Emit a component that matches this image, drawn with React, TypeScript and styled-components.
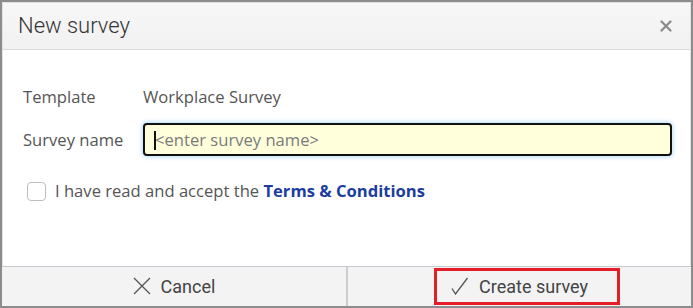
import styled, { createGlobalStyle } from "styled-components";

const GlobalStyle = createGlobalStyle`
  html, body {
    margin: 0;
    padding: 0;
    background: #ffffff;
  }
  * {
    box-sizing: border-box;
  }
`;

const Frame = styled.div`
  width: 693px;
  height: 308px;
  border: 2px solid #8c8c8c;
  display: flex;
  flex-direction: column;
`;

const Dialog = styled.div`
  flex: 1;
  display: flex;
  flex-direction: column;
  border: 1px solid #e2e2e2;
  border-bottom: none;
  background: #ffffff;
`;

const Header = styled.div`
  height: 47px;
  flex: none;
  display: flex;
  align-items: center;
  justify-content: space-between;
  padding: 0 18px 0 15px;
  background: linear-gradient(#f7f7f7, #f1f1f1);
  border-bottom: 1px solid #dadada;
`;

const Title = styled.h1`
  margin: 0;
  font-family: Roboto, "Liberation Sans", sans-serif;
  font-weight: 300;
  font-size: 22px;
  color: #333333;
  padding-bottom: 1px;
`;

const CloseButton = styled.button`
  border: none;
  background: none;
  padding: 0;
  width: 12px;
  height: 12px;
  display: flex;
  cursor: pointer;
`;

const Body = styled.div`
  flex: 1;
  display: flex;
  flex-direction: column;
  padding: 37px 18px 0 20px;
  font-family: "Open Sans", "Liberation Sans", sans-serif;
  font-size: 16.6px;
  color: #555555;
`;

const FieldRow = styled.div<{ $gap?: number }>`
  display: grid;
  grid-template-columns: 120px 1fr;
  align-items: center;
  margin-bottom: ${(p) => p.$gap ?? 0}px;
`;

const Label = styled.span`
  line-height: 20px;
`;

const Value = styled.span`
  line-height: 20px;
`;

const InputWrap = styled.div`
  position: relative;
  height: 33px;
`;

const NameInput = styled.input`
  width: 100%;
  height: 100%;
  border: 2px solid #111111;
  border-radius: 4px;
  background: #ffffdc;
  box-shadow: 0 0 4px 1px rgba(120, 190, 240, 0.55);
  padding: 0 0 1px 10px;
  font-family: "Open Sans", "Liberation Sans", sans-serif;
  font-size: 16.6px;
  color: #333333;
  outline: none;

  &::placeholder {
    color: #7a7a7a;
  }
`;

const Caret = styled.span`
  position: absolute;
  left: 11px;
  top: 8px;
  width: 2px;
  height: 19px;
  background: #111111;
`;

const CheckRow = styled.label`
  display: flex;
  align-items: center;
  gap: 9px;
  margin-left: 4px;
  line-height: 20px;
`;

const Box = styled.span`
  width: 19px;
  height: 19px;
  border: 1px solid #bdbdbd;
  border-radius: 4px;
  background: #ffffff;
`;

const TermsLink = styled.a`
  color: #1c3d9e;
  font-weight: 700;
  text-decoration: none;
`;

const Footer = styled.div`
  height: 40px;
  flex: none;
  display: grid;
  grid-template-columns: 344px 1fr;
  border-top: 1px solid #c9c9d1;
  background: #f3f3f3;
`;

const FooterButton = styled.button<{ $divider?: boolean }>`
  position: relative;
  border: none;
  border-left: ${(p) => (p.$divider ? "2px solid #cdcdd4" : "none")};
  background: transparent;
  display: flex;
  align-items: center;
  justify-content: center;
  gap: 10px;
  font-family: Roboto, "Liberation Sans", sans-serif;
  font-weight: 400;
  font-size: 18px;
  color: #444444;
  padding: 0 0 1px;
  cursor: pointer;
`;

const Highlight = styled.span`
  position: absolute;
  left: 86px;
  top: 1px;
  width: 186px;
  height: 37px;
  border: 3px solid #e31e26;
  pointer-events: none;
`;

const CloseIcon = () => (
  <svg width="12" height="12" viewBox="0 0 12 12">
    <path d="M1.5 1.5 L10.5 10.5 M10.5 1.5 L1.5 10.5" stroke="#8a8a8a" strokeWidth="2.2" strokeLinecap="round" />
  </svg>
);

const CancelIcon = () => (
  <svg width="18" height="18" viewBox="0 0 18 18">
    <path d="M1 1 L17 17 M17 1 L1 17" stroke="#555555" strokeWidth="1.3" />
  </svg>
);

const CheckIcon = () => (
  <svg width="18" height="18" viewBox="0 0 18 18">
    <path d="M1 11.5 L4.5 17 L16.5 1" stroke="#555555" strokeWidth="1.3" fill="none" />
  </svg>
);

export default function App() {
  return (
    <>
      <GlobalStyle />
      <Frame>
        <Dialog>
          <Header>
            <Title>New survey</Title>
            <CloseButton aria-label="Close">
              <CloseIcon />
            </CloseButton>
          </Header>
          <Body>
            <FieldRow $gap={16}>
              <Label>Template</Label>
              <Value>Workplace Survey</Value>
            </FieldRow>
            <FieldRow $gap={25}>
              <Label>Survey name</Label>
              <InputWrap>
                <NameInput placeholder="<enter survey name>" />
                <Caret />
              </InputWrap>
            </FieldRow>
            <CheckRow>
              <Box />
              <span>
                I have read and accept the <TermsLink href="#">Terms &amp; Conditions</TermsLink>
              </span>
            </CheckRow>
          </Body>
        </Dialog>
        <Footer>
          <FooterButton>
            <CancelIcon />
            Cancel
          </FooterButton>
          <FooterButton $divider>
            <CheckIcon />
            Create survey
            <Highlight />
          </FooterButton>
        </Footer>
      </Frame>
    </>
  );
}
